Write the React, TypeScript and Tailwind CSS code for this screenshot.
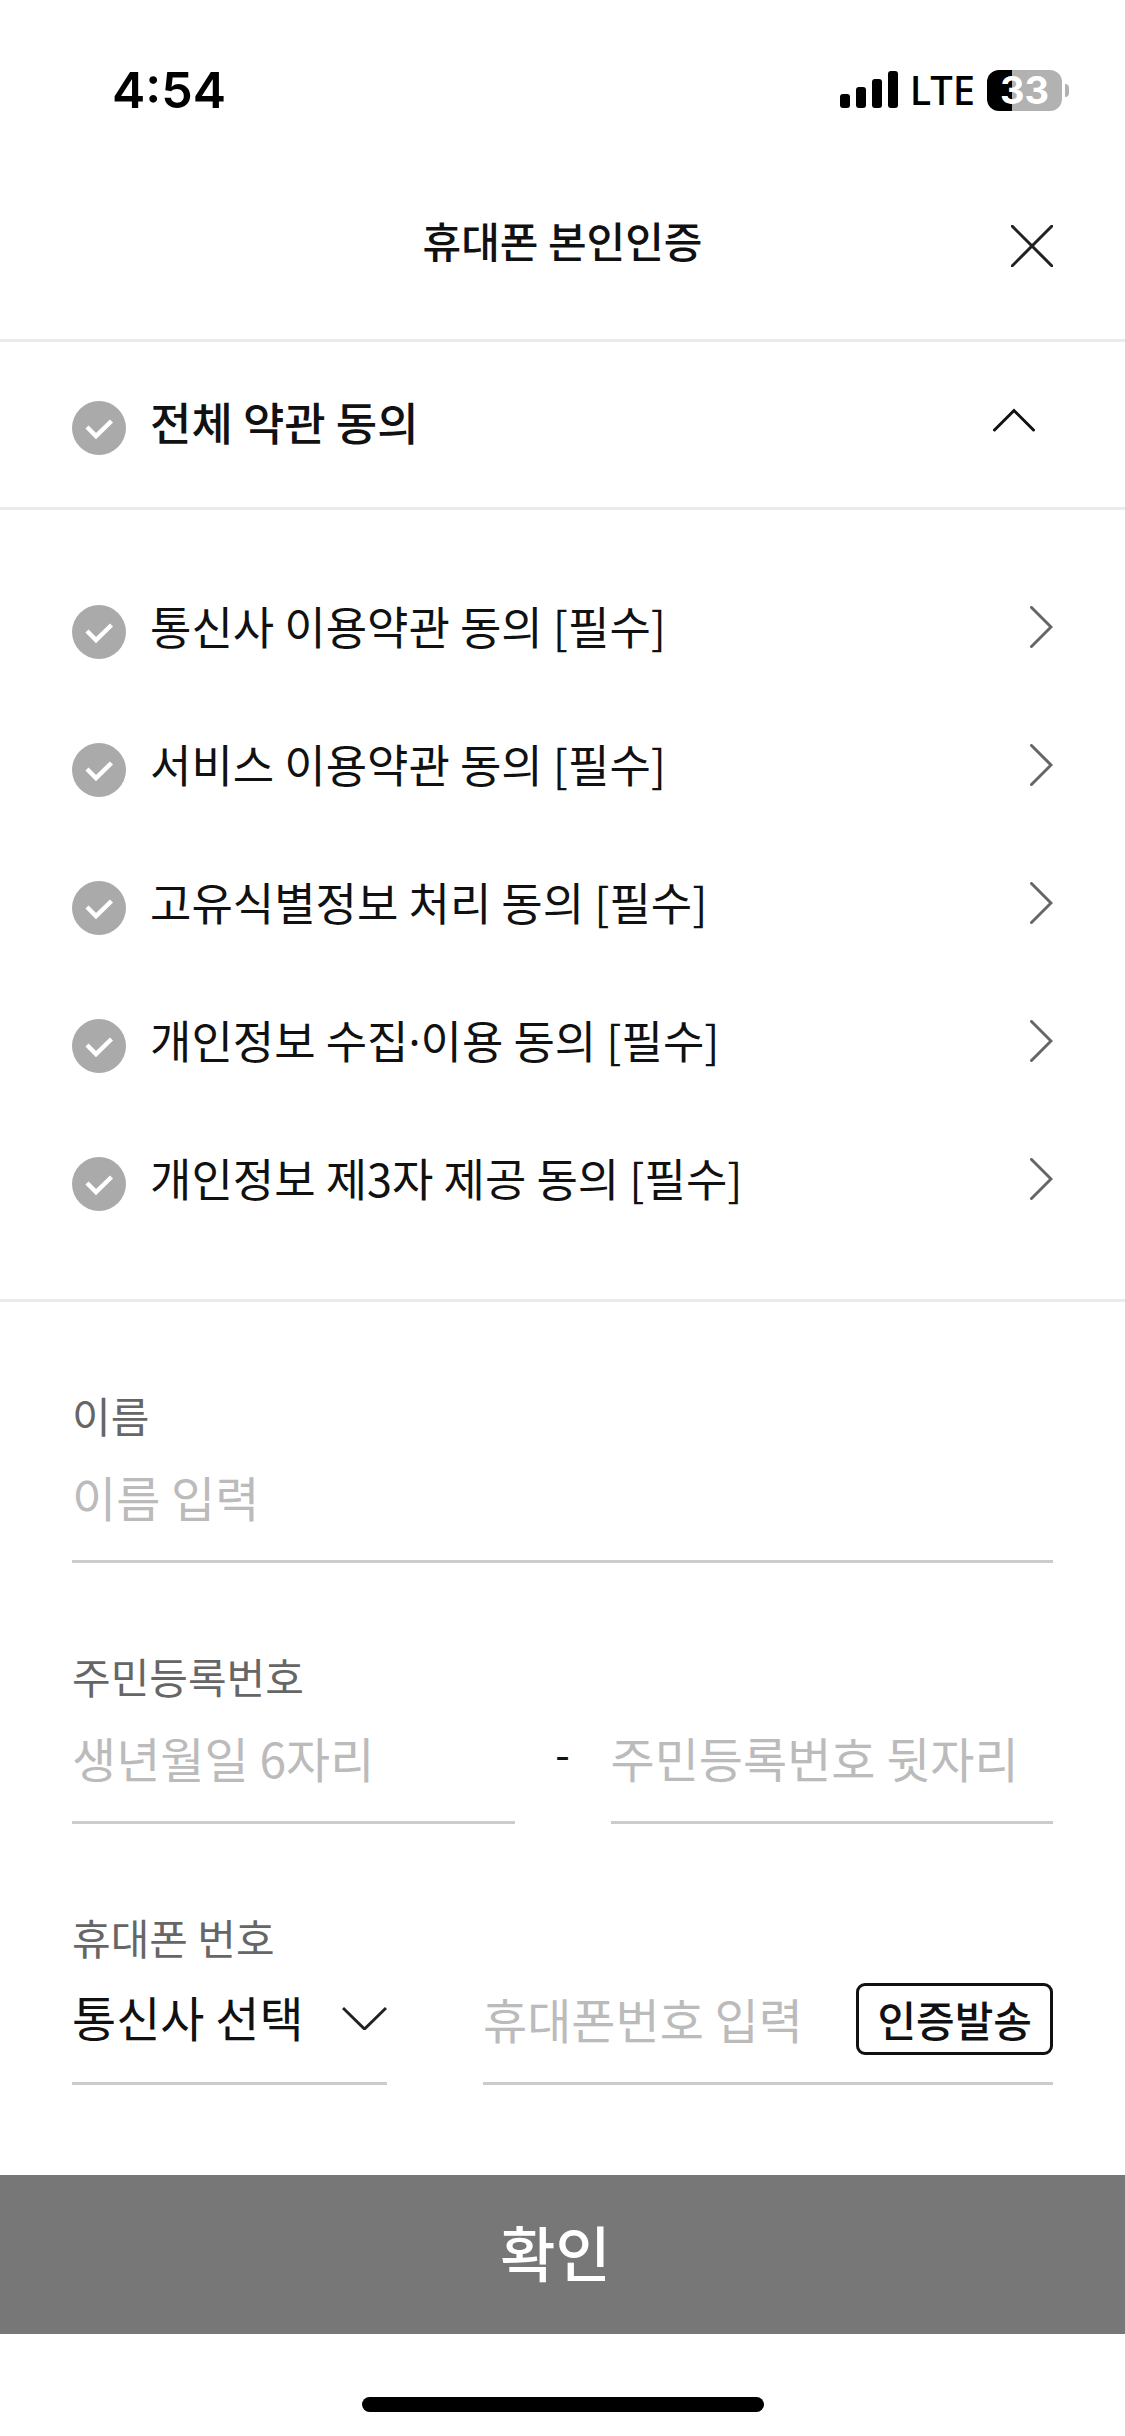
import { useState } from "react";

const TERMS = [
  "통신사 이용약관 동의 [필수]",
  "서비스 이용약관 동의 [필수]",
  "고유식별정보 처리 동의 [필수]",
  "개인정보 수집·이용 동의 [필수]",
  "개인정보 제3자 제공 동의 [필수]",
];

function StatusBar() {
  return (
    <div className="flex h-[141px] items-start justify-between pt-[68px] pr-14 pl-28 font-['Inter',sans-serif] text-black">
      <span className="text-[50px] leading-[44px] font-semibold [font-feature-settings:'case']">4:54</span>
      <div className="flex items-center gap-3">
        <svg className="h-[42px] w-[58px]" viewBox="0 0 58 42" aria-hidden="true">
          <rect x="0" y="25" width="10" height="14" rx="3" />
          <rect x="16" y="18" width="10" height="21" rx="3" />
          <rect x="32" y="10" width="10" height="29" rx="3" />
          <rect x="48" y="2" width="10" height="37" rx="3" />
        </svg>
        <span className="font-['Noto_Sans',sans-serif] text-[40px] leading-[44px] font-medium">LTE</span>
        <div className="flex items-center gap-[3px]">
          <div className="flex h-[41px] w-[75px] items-center justify-center rounded-xl bg-linear-to-r from-black from-33% to-[#b2b2b2] to-33% text-[38px] leading-[42px] font-bold text-white">
            33
          </div>
          <div className="h-[13px] w-1 rounded-r-full bg-[#b2b2b2]" />
        </div>
      </div>
    </div>
  );
}

function CheckBox({ id, checked, onChange }: { id: string; checked: boolean; onChange: () => void }) {
  return (
    <span className="mt-2 grid size-[54px] shrink-0">
      <input
        id={id}
        type="checkbox"
        checked={checked}
        onChange={onChange}
        className="col-start-1 row-start-1 size-[54px] appearance-none rounded-full bg-[#aaaaaa] checked:bg-[#111111]"
      />
      <svg
        className="pointer-events-none col-start-1 row-start-1 size-[54px]"
        viewBox="0 0 54 54"
        fill="none"
        stroke="white"
        strokeWidth="4.500"
        aria-hidden="true"
      >
        <path d="M15 26L24 35L39.500 20" />
      </svg>
    </span>
  );
}

function Field({ children }: { children: React.ReactNode }) {
  return <div className="flex min-w-0 items-center border-b-3 border-[#cccccc] pb-3">{children}</div>;
}

const inputClass =
  "h-[104px] w-full min-w-0 flex-1 bg-transparent text-[48px] text-[#111111] outline-none placeholder:text-[#bbbbbb]";
const labelClass = "block h-[60px] text-[42px] leading-[62px] text-[#666666]";

export default function App() {
  const [agreed, setAgreed] = useState<boolean[]>(TERMS.map(() => false));
  const [open, setOpen] = useState(true);
  const all = agreed.every(Boolean);

  return (
    <main className="flex min-h-screen flex-col bg-white font-['Noto_Sans_CJK_KR',sans-serif] text-[#111111]">
      <StatusBar />

      <header className="grid h-[201px] grid-cols-[1fr_auto_1fr] items-center border-b-3 border-[#ebebeb] px-[72px]">
        <h1 className="col-start-2 text-[42px] leading-[60px] font-medium">휴대폰 본인인증</h1>
        <button type="button" aria-label="닫기" className="justify-self-end pt-3">
          <svg className="size-[42px]" viewBox="0 0 42 42" stroke="#222222" strokeWidth="3" aria-hidden="true">
            <path d="M0 0L42 42M42 0L0 42" />
          </svg>
        </button>
      </header>

      <div className="flex h-[168px] items-start border-b-3 border-[#ebebeb] px-[72px] pt-[51px]">
        <CheckBox id="all" checked={all} onChange={() => setAgreed(TERMS.map(() => !all))} />
        <label htmlFor="all" className="ml-6 flex-1 text-[45px] leading-[58px] font-medium">
          전체 약관 동의
        </label>
        <button type="button" aria-label="약관 펼치기" aria-expanded={open} onClick={() => setOpen(!open)} className="h-[54px] px-4">
          <svg className="h-6 w-[46px]" viewBox="0 0 46 24" fill="none" stroke="#111111" strokeWidth="3" strokeLinecap="round" aria-hidden="true">
            <path d="M3.500 22L23 2.500L42.500 22" />
          </svg>
        </button>
      </div>

      {open && (
        <ul className="flex flex-col gap-[76px] border-b-3 border-[#ebebeb] px-[72px] pt-[87px] pb-[88px]">
          {TERMS.map((term, i) => (
            <li key={term} className="flex h-[62px] items-start">
              <CheckBox
                id={`term-${i}`}
                checked={agreed[i]}
                onChange={() => setAgreed(agreed.map((v, j) => (j === i ? !v : v)))}
              />
              <label htmlFor={`term-${i}`} className="ml-6 flex-1 text-[45px] leading-[58px]">
                {term.split("·").map((part, j) => (
                  <span key={part}>
                    {j > 0 && <span className="font-['Noto_Sans']">·</span>}
                    {part}
                  </span>
                ))}
              </label>
              <button type="button" aria-label={`${term} 보기`} className="flex h-[60px] items-center">
                <svg className="h-[42px] w-6" viewBox="0 0 24 42" fill="none" stroke="#666666" strokeWidth="3" strokeLinecap="round" aria-hidden="true">
                  <path d="M2.500 1.500L22 21L2.500 40.500" />
                </svg>
              </button>
            </li>
          ))}
        </ul>
      )}

      <form className="flex flex-1 flex-col" onSubmit={(e) => e.preventDefault()}>
        <div className="flex flex-col gap-[82px] px-[72px] pt-[82px] pb-[90px]">
          <div>
            <label htmlFor="name" className={labelClass}>이름</label>
            <Field>
              <input id="name" type="text" placeholder="이름 입력" className={inputClass} />
            </Field>
          </div>

          <div>
            <label htmlFor="birth" className={labelClass}>주민등록번호</label>
            <div className="grid grid-cols-[1fr_96px_1fr]">
              <Field>
                <input id="birth" type="text" inputMode="numeric" placeholder="생년월일 6자리" className={inputClass} />
              </Field>
              <span className="text-center text-[42px] leading-[94px]">-</span>
              <Field>
                <input type="text" inputMode="numeric" aria-label="주민등록번호 뒷자리" placeholder="주민등록번호 뒷자리" className={inputClass} />
              </Field>
            </div>
          </div>

          <div>
            <label htmlFor="phone" className={labelClass}>휴대폰 번호</label>
            <div className="grid grid-cols-[315fr_570fr] gap-24">
              <Field>
                <div className="grid flex-1 items-center">
                  <select aria-label="통신사 선택" className="col-start-1 row-start-1 h-[104px] w-full appearance-none bg-transparent pb-1 text-[48px] outline-none">
                    <option>통신사 선택</option>
                    <option>SKT</option>
                    <option>KT</option>
                    <option>LG U+</option>
                  </select>
                  <svg className="pointer-events-none col-start-1 row-start-1 h-6 w-[45px] justify-self-end" viewBox="0 0 45 24" fill="none" stroke="#222222" strokeWidth="3" aria-hidden="true">
                    <path d="M1 2L22.500 23L44 2" />
                  </svg>
                </div>
              </Field>
              <Field>
                <input id="phone" type="tel" placeholder="휴대폰번호 입력" className={inputClass} />
                <button type="button" className="mt-[2px] h-[72px] shrink-0 rounded-[9px] border-3 border-[#111111] px-[18px] text-[42px] leading-[66px] font-medium">
                  인증발송
                </button>
              </Field>
            </div>
          </div>
        </div>

        <button type="submit" className="h-[159px] w-full bg-[#777777] pr-3.5 pb-2 text-[60px] leading-[84px] font-medium text-white">
          확인
        </button>
      </form>

      <div className="flex justify-center pb-6">
        <div className="h-[15px] w-[402px] rounded-full bg-black" />
      </div>
    </main>
  );
}
